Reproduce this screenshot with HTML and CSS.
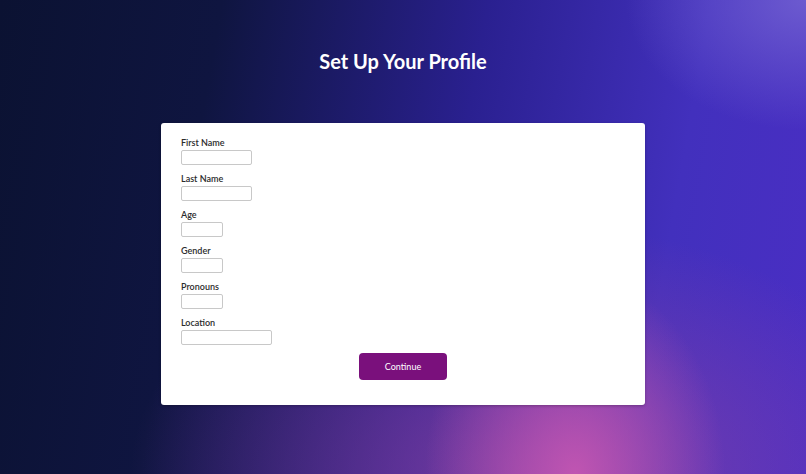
FILE: index.html
```html
<!DOCTYPE html>
<html lang="en">
<head>
<meta charset="utf-8">
<title>Set Up Your Profile</title>
<link rel="stylesheet" href="styles.css">
</head>
<body>
<main class="page">
  <h1 class="title">Set Up Your Profile</h1>
  <form class="card">
    <div class="field">
      <label class="label" for="first">First Name</label>
      <input class="input input-md" id="first" type="text">
    </div>
    <div class="field">
      <label class="label" for="last">Last Name</label>
      <input class="input input-md" id="last" type="text">
    </div>
    <div class="field">
      <label class="label" for="age">Age</label>
      <input class="input input-sm" id="age" type="text">
    </div>
    <div class="field">
      <label class="label" for="gender">Gender</label>
      <input class="input input-sm" id="gender" type="text">
    </div>
    <div class="field">
      <label class="label" for="pronouns">Pronouns</label>
      <input class="input input-sm" id="pronouns" type="text">
    </div>
    <div class="field">
      <label class="label" for="location">Location</label>
      <input class="input input-lg" id="location" type="text">
    </div>
    <div class="actions">
      <button class="button" type="button">Continue</button>
    </div>
  </form>
</main>
</body>
</html>
```

FILE: styles.css
```css
* { box-sizing: border-box; }

html, body {
  margin: 0;
  height: 100%;
}

body {
  font-family: Lato, "Open Sans", sans-serif;
  background-color: #0c1233;
  background-image:
    radial-gradient(ellipse 150px 200px at 575px 474px, rgba(196, 86, 178, 0.95), rgba(196, 86, 178, 0) 100%),
    radial-gradient(ellipse 180px 130px at 806px 0px, rgba(115, 98, 210, 0.85), rgba(115, 98, 210, 0) 100%),
    radial-gradient(ellipse 400px 250px at 530px 474px, rgba(150, 70, 160, 0.7), rgba(150, 70, 160, 0) 100%),
    linear-gradient(100deg, #0b1232 0%, #0f1540 25%, #2a2090 55%, #4230bd 80%, #4a2ec4 100%);
  overflow: hidden;
}

.page {
  display: flex;
  flex-direction: column;
  align-items: center;
  padding-top: 49px;
}

.title {
  margin: 0;
  font-size: 20px;
  line-height: 24px;
  font-weight: 700;
  color: #ffffff;
}

.card {
  margin-top: 50px;
  width: 484px;
  background: #ffffff;
  border-radius: 3px;
  padding: 14px 20px 25px;
  display: flex;
  flex-direction: column;
  gap: 8px;
  box-shadow: 0 1px 3px rgba(0, 0, 0, 0.25);
}

.field {
  display: flex;
  flex-direction: column;
  align-items: flex-start;
  gap: 1px;
}

.label {
  font-size: 9px;
  line-height: 12px;
  font-weight: 600;
  color: #2b2b2b;
}

.input {
  height: 15px;
  margin: 0;
  padding: 0 3px;
  border: 1px solid #c8c8c8;
  border-radius: 2px;
  background: #ffffff;
  font: inherit;
  font-size: 9px;
}

.input-sm { width: 42px; }
.input-md { width: 71px; }
.input-lg { width: 91px; }

.actions {
  display: flex;
  justify-content: center;
}

.button {
  width: 88px;
  height: 27px;
  border: 0;
  border-radius: 4px;
  background: #7a107c;
  color: #ffffff;
  font-family: Lato, "Open Sans", sans-serif;
  font-size: 9px;
  line-height: 27px;
  padding: 0;
}
```
